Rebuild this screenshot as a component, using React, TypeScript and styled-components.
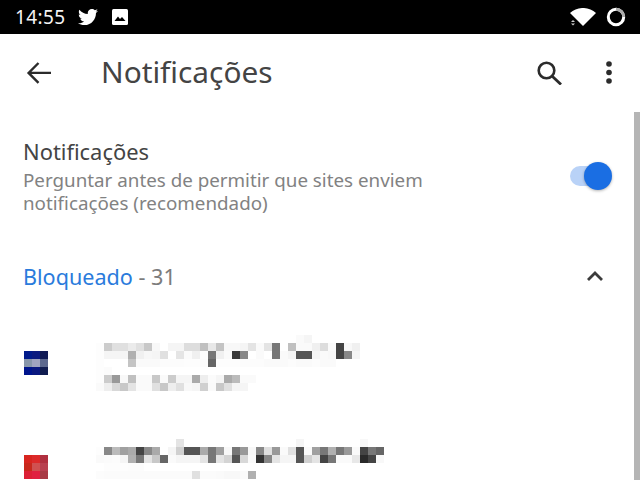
import React from "react";
import styled, { createGlobalStyle } from "styled-components";
import { FaTwitter } from "react-icons/fa";

type Cell = [number, string];

interface SiteEntry {
    icon: string[][];
    textRows: { y: number; cells: Cell[] }[];
}

const GlobalStyle = createGlobalStyle`
  html, body {
    margin: 0;
    padding: 0;
    background: #fff;
  }
  body {
    font-family: "Noto Sans", "Open Sans", sans-serif;
  }
`;

const Page = styled.div`
  position: relative;
  width: 640px;
  height: 480px;
  overflow: hidden;
  background: #fff;
`;

const StatusBar = styled.div`
  height: 34px;
  background: #000;
  color: #f4f4f4;
  display: flex;
  align-items: center;
  padding: 0 14px 0 15px;
`;

const Clock = styled.span`
  font-size: 19px;
  letter-spacing: 0.4px;
  margin-right: 12px;
`;

const StatusIcons = styled.div`
  display: flex;
  align-items: center;
  gap: 14px;
  flex: 1;
`;

const StatusRight = styled.div`
  display: flex;
  align-items: center;
  gap: 10px;
`;

const Header = styled.header`
  height: 78px;
  display: flex;
  align-items: center;
  padding: 0 28px 0 24px;
  color: #2b2b2b;
`;

const HeaderTitle = styled.h1`
  flex: 1;
  margin: 0 0 3px 49px;
  font-size: 29.8px;
  font-weight: 400;
  color: #444;
`;

const HeaderActions = styled.div`
  display: flex;
  align-items: center;
  gap: 44px;
`;

const SettingRow = styled.section`
  display: flex;
  align-items: center;
  justify-content: space-between;
  padding: 25px 29px 0 23px;
`;

const SettingTitle = styled.div`
  font-size: 21.9px;
  line-height: 29px;
  color: #444;
`;

const SettingSummary = styled.div`
  font-size: 18.8px;
  line-height: 23px;
  color: #828282;
  width: 480px;
  padding-top: 3px;
`;

const Toggle = styled.div`
  position: relative;
  width: 41px;
  height: 20px;
  border-radius: 10px;
  background: #b9d2f7;
`;

const ToggleThumb = styled.div`
  position: absolute;
  right: -1px;
  top: -4px;
  width: 28px;
  height: 28px;
  border-radius: 50%;
  background: #1a6ee3;
  box-shadow: 0 1px 3px rgba(0, 0, 0, 0.3);
`;

const GroupRow = styled.div`
  display: flex;
  align-items: center;
  justify-content: space-between;
  padding: 0 37px 0 23px;
  margin-top: 45px;
  height: 32px;
`;

const GroupLabel = styled.div`
  font-size: 21.6px;
  color: #7c7c7c;
`;

const GroupName = styled.span`
  color: #2a7bdc;
`;

const SiteList = styled.div`
  margin-top: 43px;
  display: flex;
  flex-direction: column;
`;

const SiteRow = styled.div`
  position: relative;
  height: 104px;
  flex: none;
`;

const Mosaic = styled.svg`
  display: block;
  shape-rendering: crispEdges;
`;

const ScrollThumb = styled.div`
  position: absolute;
  right: 0;
  top: 112px;
  bottom: 0;
  width: 6px;
  background: #b5b5b5;
`;

// pixel cells start at x=96 and y=336, each cell is 8px
const row = (start: number, values: string): Cell[] =>
    values.split(" ").map((v, i) => [start + i * 8, "#" + v] as Cell);

const sites: SiteEntry[] = [
    {
        icon: [
            ["001a8a", "0a1a80", "101a55"],
            ["8896aa", "a0a4c0", "5c688e"],
            ["00148c", "0a1880", "101c50"],
        ],
        textRows: [
            { y: 0, cells: row(296, "fafafa f5f5f5") },
            {
                y: 8,
                cells: row(
                    96,
                    "fdfdfd cccccc e0e0e0 e0e0e0 ebebeb e0e0e0 c8c8c8 f8f8f8 ffffff f5f5f5 f5f5f5 dddddd dddddd c0c0c0 e8e8e8 c4c4c4 f8f8f8 f8f8f8 f5f5f5 e4e4e4 fafafa e4e4e4 777777 ffffff c0c0c0 fafafa fafafa f0f0f0 dddddd fafafa 444444 f8f8f8 f0f0f0"
                ),
            },
            {
                y: 16,
                cells: row(
                    96,
                    "fdfdfd f5f5f5 f5f5f5 f5f5f5 b0b0b0 f0f0f0 f7f7f7 f5f5f5 e0e0e0 ffffff e5e5e5 fbfbfb f0f0f0 fdfdfd 777777 f0f0f0 fafafa 3a3a3a 888888 ffffff fafafa ffffff 777777 fafafa f5f5f5 555555 555555 f5f5f5 fafafa f8f8f8 444444 888888 f5f5f5"
                ),
            },
            {
                y: 24,
                cells: row(
                    96,
                    "fdfdfd ffffff ffffff ffffff c4c4c4 fafafa fafafa fafafa fcfcfc fcfcfc fcfcfc fdfdfd fdfdfd fcfcfc 666666 fdfdfd fdfdfd fdfdfd fcfcfc fcfcfc fcfcfc fafafa fafafa fafafa fcfcfc fafafa fafafa fcfcfc fafafa fafafa"
                ),
            },
            { y: 32, cells: row(96, "fdfdfd fbfbfb") },
            {
                y: 40,
                cells: row(
                    96,
                    "fdfdfd cccccc 999999 f8f8f8 c0c0c0 fafafa fafafa c8c8c8 fafafa cccccc f5f5f5 f5f5f5 aaaaaa eeeeee fbfbfb f5f5f5 aaaaaa bbbbbb fafafa fafafa"
                ),
            },
            {
                y: 48,
                cells: row(
                    96,
                    "fafafa eeeeee d8d8d8 c8c8c8 e4e4e4 fafafa fafafa e0e0e0 c8c8c8 eeeeee e0e0e0 f8f8f8 f5f5f5 d0d0d0 fafafa c8c8c8 e0e0e0 f5f5f5 f5f5f5"
                ),
            },
        ],
    },
    {
        icon: [
            ["d8251f", "dc2a2a", "b03040"],
            ["c8281c", "d05050", "b84050"],
            ["dc2035", "e02040", "a83a45"],
        ],
        textRows: [
            { y: 0, cells: [[176, "#e4e4e4"], [296, "#f5f5f5"], [360, "#f8f8f8"]] },
            {
                y: 8,
                cells: row(
                    96,
                    "fdfdfd 888888 bbbbbb a0a0a0 aaaaaa 444444 888888 aaaaaa ffffff f5f5f5 d0d0d0 555555 555555 aaaaaa 777777 a0a0a0 f8f8f8 777777 999999 f8f8f8 888888 e0e0e0 999999 fafafa e0e0e0 555555 fafafa a0a0a0 777777 b0b0b0 777777 999999 fafafa 444444 777777 666666"
                ),
            },
            {
                y: 16,
                cells: row(
                    96,
                    "fafafa fbfbfb fcfcfc f5f5f5 b0b0b0 777777 e4e4e4 c8c8c8 666666 fafafa f5f5f5 f5f5f5 f5f5f5 e4e4e4 777777 e4e4e4 d4d4d4 555555 d8d8d8 fafafa 333333 888888 e4e4e4 f5f5f5 f5f5f5 555555 d0d0d0 e4e4e4 444444 777777 fafafa fafafa e8e8e8 2a2a2a 444444 f8f8f8"
                ),
            },
            { y: 24, cells: row(96, "ffffff fdfdfd fdfdfd fdfdfd fcfcfc fcfcfc") },
            {
                y: 32,
                cells: row(
                    96,
                    "fcfcfc fbfbfb fbfbfb fbfbfb fbfbfb fbfbfb fbfbfb fbfbfb fbfbfb fbfbfb fbfbfb fbfbfb e0e0e0 fbfbfb fbfbfb fafafa f8f8f8 f8f8f8 fbfbfb b0b0b0"
                ),
            },
        ],
    },
];

const SiteIcon = styled(Mosaic)`
  position: absolute;
  left: 24px;
  top: 16px;
`;

const SiteText = styled(Mosaic)`
  position: absolute;
  left: 96px;
  top: 0;
`;

const Site = ({ icon, textRows }: SiteEntry) => (
    <SiteRow>
        <SiteIcon width="24" height="24">
            {icon.map((colors, y) =>
                colors.map((c, x) => (
                    <rect key={`${x}-${y}`} x={x * 8} y={y * 8} width="8" height="8" fill={"#" + c} />
                ))
            )}
        </SiteIcon>
        <SiteText width="300" height="56">
            {textRows.map((r) =>
                r.cells.map(([x, c]) => (
                    <rect key={`${x}-${r.y}`} x={x - 96} y={r.y} width="8" height="8" fill={c} />
                ))
            )}
        </SiteText>
    </SiteRow>
);

const App = () => (
    <Page>
        <GlobalStyle />
        <StatusBar>
            <Clock>14:55</Clock>
            <StatusIcons>
                <FaTwitter size={20} color="#fff" />
                <svg width="16" height="16" viewBox="0 0 16 16">
                    <rect width="16" height="16" rx="1.5" fill="#fff" />
                    <path d="M2.5 12 L6 7.5 L8 10 L10 8 L13.5 12 Z" fill="#000" />
                </svg>
            </StatusIcons>
            <StatusRight>
                <svg width="26" height="18" viewBox="0 0 26 18">
                    <path d="M0 5 C 7 -1.7, 19 -1.7, 26 5 L 13 18 Z" fill="#fff" />
                    <path d="M0 11 H6 V18 H0 Z" fill="#000" />
                    <path d="M1 14 L3 12 L5 14 Z M1 15.5 L5 15.5 L3 17.5 Z" fill="#ccc" />
                </svg>
                <svg width="20" height="20" viewBox="0 0 20 20">
                    <circle cx="10" cy="10" r="7.7" fill="none" stroke="#fff" strokeWidth="3" />
                    <path d="M10 2.3 A7.7 7.7 0 0 1 17.7 10" fill="none" stroke="#aaa" strokeWidth="3" />
                </svg>
            </StatusRight>
        </StatusBar>
        <Header>
            <svg width="28" height="28" viewBox="0 0 28 28">
                <path d="M27 13.9 H6 M14.5 4 L4.6 13.9 L14.5 23.8" fill="none" stroke="#2b2b2b" strokeWidth="2.4" />
            </svg>
            <HeaderTitle>Notificações</HeaderTitle>
            <HeaderActions>
                <svg width="25" height="24" viewBox="0 0 25 24">
                    <circle cx="9.5" cy="9.5" r="7.8" fill="none" stroke="#2b2b2b" strokeWidth="2.6" />
                    <path d="M15.5 15.5 L24 23.5" stroke="#2b2b2b" strokeWidth="2.8" />
                </svg>
                <svg width="6" height="24" viewBox="0 0 6 24">
                    <circle cx="3" cy="3" r="2.8" fill="#2b2b2b" />
                    <circle cx="3" cy="11.5" r="2.8" fill="#2b2b2b" />
                    <circle cx="3" cy="20" r="2.8" fill="#2b2b2b" />
                </svg>
            </HeaderActions>
        </Header>
        <SettingRow>
            <div>
                <SettingTitle>Notificações</SettingTitle>
                <SettingSummary>
                    Perguntar antes de permitir que sites enviem notificações (recomendado)
                </SettingSummary>
            </div>
            <Toggle>
                <ToggleThumb />
            </Toggle>
        </SettingRow>
        <GroupRow>
            <GroupLabel>
                <GroupName>Bloqueado</GroupName> - 31
            </GroupLabel>
            <svg width="16" height="10" viewBox="0 0 16 10">
                <path d="M1 9 L8 2 L15 9" fill="none" stroke="#3c3c3c" strokeWidth="2.8" />
            </svg>
        </GroupRow>
        <SiteList>
            {sites.map((s, i) => (
                <Site key={i} {...s} />
            ))}
        </SiteList>
        <ScrollThumb />
    </Page>
);

export default App;
